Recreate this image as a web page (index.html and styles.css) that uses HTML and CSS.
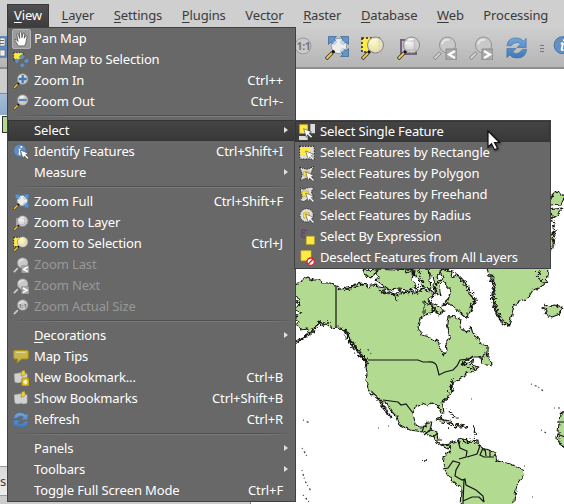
FILE: index.html
```html
<!DOCTYPE html>
<html lang="en">
<head>
<meta charset="utf-8">
<title>View menu</title>
<link rel="stylesheet" href="styles.css">
</head>
<body>
<svg class="defs" width="0" height="0">
  <defs>
    <filter id="coast" x="0" y="0" width="1" height="1"><feTurbulence type="fractalNoise" baseFrequency=".22" numOctaves="2" seed="4"/><feDisplacementMap in="SourceGraphic" scale="5" xChannelSelector="R" yChannelSelector="G"/></filter>
    <filter id="jagged" x="0" y="0" width="1" height="1"><feTurbulence type="fractalNoise" baseFrequency=".4" numOctaves="2" seed="9"/><feDisplacementMap in="SourceGraphic" scale="9" xChannelSelector="R" yChannelSelector="G"/></filter>
    <radialGradient id="glass" cx=".4" cy=".35"><stop offset="0" stop-color="#fafafa"/><stop offset="1" stop-color="#d2d2d2"/></radialGradient>
    <linearGradient id="blue" x2="0" y2="1"><stop offset="0" stop-color="#75a5dc"/><stop offset="1" stop-color="#3f78b8"/></linearGradient>
    <symbol id="lens" viewBox="0 0 24 24">
      <path d="M1 23 7.500 16.500" stroke="#333" stroke-width="3.600"/><path d="M1.500 22.500 7 17" stroke="#f4c63a" stroke-width="2.200"/>
      <circle cx="8.300" cy="15.700" r="1.600" fill="#111"/>
      <circle cx="14.500" cy="9" r="8" fill="url(#glass)" fill-opacity=".9" stroke="#8a8a84" stroke-width="1"/>
      <path d="M9 8q2-5 7-4" fill="none" stroke="#fff" stroke-width="1.500"/>
    </symbol>
    <symbol id="lensgrey" viewBox="0 0 24 24">
      <path d="M1 23 7.500 16.500" stroke="#858585" stroke-width="3.400"/><path d="M1.500 22.500 7 17" stroke="#d2d2d2" stroke-width="2"/>
      <circle cx="14.500" cy="9" r="8" fill="#c9c9c9" stroke="#929292"/><path d="M9 8q2-5 7-4" fill="none" stroke="#e6e6e6" stroke-width="2"/>
    </symbol>
    <symbol id="arrow" viewBox="0 0 24 24"><path d="M10 9 22 14 18 16 23 21 21 23 16 18 14 22z" fill="#fff" stroke="#333" stroke-width=".8"/></symbol>
    <symbol id="hand" viewBox="0 0 24 24"><path d="M7 23 1.500 14q-.8-2.500 2-1l3 3L4.500 5q.5-2.500 2.500-.3L9 11 9 2q1.500-2.500 3 0l.7 8L14.500 3q2-1.500 2.600.8l-.6 7 2.300-4q2-1 2 1.200L19 18l-2 5z" fill="#fff" stroke="#333" stroke-width="1"/></symbol>
    <symbol id="pansel" viewBox="0 0 24 24">
      <path d="M1 1h14v9H8v4l-4 1v-4L1 9z" fill="#ffeb3b"/><path d="M1 1h15v9M1 1v12h5" fill="none" stroke="#333" stroke-width="1.500" stroke-dasharray="2 2"/>
      <path d="m14 3 4 4-3 3h-3L9 7zM10 13l-5 5-2-5 2-3zM22 9l2 6-5 2-3-4zM14 16l4 4-4 4-4-4z" fill="#6790bd" stroke="#44678f" stroke-width=".6"/>
    </symbol>
    <symbol id="zoomin" viewBox="0 0 24 24"><use href="#lens"/><path d="M14.500 3v12M8.500 9h12" stroke="#427ab8" stroke-width="3.500"/></symbol>
    <symbol id="zoomout" viewBox="0 0 24 24"><use href="#lens"/><path d="M8.500 9h12" stroke="#5d86b3" stroke-width="3.500"/></symbol>
    <symbol id="info" viewBox="0 0 24 24"><circle cx="10.500" cy="10" r="9.300" fill="#648fc3" stroke="#3e72ac"/><path d="M11 7.500 9.500 14q-.5 2 2 1M8.500 8.500 11 7.500" fill="none" stroke="#fff" stroke-width="2"/><circle cx="12.500" cy="4.500" r="1.500" fill="#fff"/></symbol>
    <symbol id="identify" viewBox="0 0 24 24"><use href="#info"/><use href="#arrow" x="1"/></symbol>
    <symbol id="full" viewBox="0 0 24 24"><circle cx="14" cy="10" r="7.800" fill="#e6e8ea" stroke="#9a9a96"/><path d="M3.500.5h8L9 3l3 3-3 3-3-3-2.500 2.500zM23.500.5h-8L18 3l-3 3 3 3 3-3 2.500 2.500zM23.500 20.500h-8L18 18l-3-3 3-3 3 3 2.500-2.500z" fill="#6794c4" stroke="#3e6c9c" stroke-width=".8"/><circle cx="14" cy="10" r="6.500" fill="#eee" fill-opacity=".72"/><path d="M1 23 7.500 16.500" stroke="#333" stroke-width="3.600"/><path d="M1.500 22.500 7 17" stroke="#f4c63a" stroke-width="2.200"/><circle cx="8.300" cy="15.700" r="1.600" fill="#111"/></symbol>
    <symbol id="layer" viewBox="0 0 24 24"><path d="M4 4h15v14H4z" fill="#c5bfc8" stroke="#74617a" stroke-width="2"/><use href="#lens"/><path d="M8.500 5h9v9h-8" fill="none" stroke="#74617a" stroke-opacity=".2" stroke-width="1.500"/></symbol>
    <symbol id="zoomsel" viewBox="0 0 24 24"><path d="M1 2h17v14H1z" fill="#ffeb46" stroke="#222" stroke-dasharray="2 2" stroke-width="1.500"/><use href="#lens"/><circle cx="14.500" cy="9" r="7" fill="#fff199" opacity=".45"/></symbol>
    <symbol id="last" viewBox="0 0 24 24"><use href="#lensgrey"/><path d="M13 13h11v11H13z" fill="#aaa" stroke="#888"/><path d="m22 15-6 3.500 6 3.500" fill="none" stroke="#fff" stroke-width="2.200"/></symbol>
    <symbol id="next" viewBox="0 0 24 24"><use href="#lensgrey"/><path d="M13 13h11v11H13z" fill="#aaa" stroke="#888"/><path d="m15 15 6 3.500-6 3.500" fill="none" stroke="#fff" stroke-width="2.200"/></symbol>
    <symbol id="actual" viewBox="0 0 24 24"><use href="#lensgrey"/><text x="14.500" y="13" class="ratio" text-anchor="middle">1:1</text></symbol>
    <symbol id="tip" viewBox="0 0 24 24"><path d="M3 2h18q2 0 2 2v9q0 2-2 2h-8l-7 6 1-6H3q-2 0-2-2V4q0-2 2-2z" fill="#c9b64a" stroke="#a78b10" stroke-width="1.500"/><path d="M4 5h15" stroke="#e1d69a" stroke-width="2"/></symbol>
    <symbol id="book" viewBox="0 0 24 24"><path d="m2 6 11-2 8 2v12q-5 2-9 0-5 2-9 0z" fill="#d1d1d1" stroke="#bbb"/><path d="m12 9 1-7 4-2 2 6-4 3z" fill="#ecd036" stroke="#9f8b1d"/></symbol>
    <symbol id="newbook" viewBox="0 0 24 24"><use href="#book"/><rect x="13" y="12" width="11" height="12" rx="2" fill="#d4b612" stroke="#a18600"/><path d="M18.500 14v8M15 18h7M16 15.500l5 5M21 15.500l-5 5" stroke="#fff" stroke-width="1.500"/></symbol>
    <symbol id="refresh" viewBox="0 0 24 24"><path d="M1 9.500Q2 1 11 1q5 0 8 3.500l3-3v10H12l4-4Q11 3.500 5.500 9.500zM22.500 13.500q-1 9.500-10.500 9.500-5 0-8-3.500l-3 3v-10h10l-4 4q6 4 11-3z" fill="url(#blue)" stroke="#3c70aa" stroke-width=".7"/></symbol>
    <symbol id="single" viewBox="0 0 24 24"><path d="M17 0h7v14h-7zM0 18h13v6H0z" fill="#ddd"/><path d="M1 1h12v13H1z" fill="#ffe944" stroke="#d6bb20"/><use href="#arrow" x="-3" y="-2"/></symbol>
    <symbol id="rectangle" viewBox="0 0 24 24"><path d="M1 2h22v19H1z" fill="#ddd" stroke="#222" stroke-width="1.700" stroke-dasharray="2 2"/><path d="M2 3h15v13H2z" fill="#ffe944"/><use href="#arrow"/></symbol>
    <symbol id="polygon" viewBox="0 0 24 24"><path d="m1 2 11 3 10-4-4 10 4 10-11-3-9 4 3-10z" fill="#ddd" stroke="#222" stroke-width="1.500" stroke-dasharray="2 1.500"/><path d="M7 8h8v7H7z" fill="#ffe944" stroke="#c1a51a"/><use href="#arrow"/></symbol>
    <symbol id="freehand" viewBox="0 0 24 24"><path d="M2 1q4 4 9 1 8-3 11 0-5 4-2 9t-2 8q-5-3-9 2-5 2-7-2 5-4 1-9z" fill="#ddd" stroke="#222" stroke-width="1.500" stroke-dasharray="2 1.500"/><path d="M5 6h9v8H5z" fill="#ffe944" stroke="#c1a51a"/><use href="#arrow"/></symbol>
    <symbol id="radius" viewBox="0 0 24 24"><circle cx="11.500" cy="11" r="10" fill="#ddd" stroke="#222" stroke-width="1.500" stroke-dasharray="2 2"/><path d="M7 7h8v8H7z" fill="#ffe944" stroke="#c1a51a"/><use href="#arrow"/></symbol>
    <symbol id="expression" viewBox="0 0 24 24"><path d="M12 3Q4-1 4 4q1 3 5 2-7 1-5 5 3 3 8 0" fill="none" stroke="#644b70" stroke-width="2.500"/><path d="M11 11h12v12H11z" fill="#ffe944" stroke="#cdb11c"/></symbol>
    <symbol id="deselect" viewBox="0 0 24 24"><path d="M3 1h15v15H3z" fill="#ffe944" stroke="#d5b918"/><circle cx="17.500" cy="17.500" r="5.500" fill="#fff" stroke="#d3232c" stroke-width="2"/><path d="m14 21 7-7" stroke="#d3232c" stroke-width="2"/></symbol>
  </defs>
</svg>

<div class="window">
  <nav class="menubar">
    <span class="title open"><u>V</u>iew</span><span class="title"><u>L</u>ayer</span><span class="title"><u>S</u>ettings</span><span class="title"><u>P</u>lugins</span><span class="title">Vect<u>o</u>r</span><span class="title"><u>R</u>aster</span><span class="title"><u>D</u>atabase</span><span class="title"><u>W</u>eb</span><span class="title">Processing</span>
  </nav>
  <div class="toolbar">
    <svg class="clip" viewBox="0 0 7 22"><path d="M0 0h7v22H0z" fill="#5f8fc4"/><path d="M0 2h5v8H0zM0 14h5v6H0z" fill="#eee" stroke="#666" stroke-width=".6"/><path d="M0 4.500h4M0 7.500h4" stroke="#666"/></svg>
    <svg class="one"><circle cx="8" cy="10" r="8" fill="#c9c9c9" stroke="#999"/><text x="8.500" y="14" class="ratio large" text-anchor="middle">1:1</text></svg>
    <svg><use href="#full"/></svg><svg><use href="#zoomsel"/></svg><svg><use href="#layer"/></svg><svg><use href="#last"/></svg><svg><use href="#next"/></svg><svg class="reload"><use href="#refresh"/></svg>
    <i class="grip"></i>
    <svg class="edge"><use href="#info"/></svg>
  </div>
  <main class="workspace">
    <aside class="panel">
      <div class="panel-head"></div><div class="panel-selected"></div><div class="legend"></div><div class="panel-space"></div><div class="panel-tab">s</div><div class="panel-foot"></div>
    </aside>
    <svg class="map" viewBox="296 69 268 435">
      <g class="land" filter="url(#coast)">
        <path d="M285 287 298 283 302 282 304 279 308 277 312 280 319 280 323 283 329 283 336 286 342 290 345 287 349 289 354 285 357 286 360 282 363 285 366 283 368 287 375 284 379 288 385 289 382 293 390 292 395 295 399 290 407 294 412 290 417 293 423 288 428 292 431 289 434 297 428 299 431 304 425 312 429 314 420 318 418 327 422 335 430 337 438 342 441 350 444 354 447 351 446 343 450 337 447 328 449 317 454 316 461 320 460 326 466 333 471 327 473 334 477 337 480 343 487 347 487 355 481 357 471 357 465 361 461 366 467 363 473 360 471 365 479 367 473 371 467 373 464 376 458 380 451 385 452 391 450 395 442 402 444 413 441 413 438 405 431 403 427 406 422 404 415 407 413 413 415 423 420 427 425 427 427 422 432 422 430 430 437 432 438 441 443 445 449 444 448 449 442 446 438 444 433 437 427 434 422 432 417 431 410 430 400 425 397 417 391 411 387 404 381 400 383 405 387 410 389 415 392 418 387 414 382 407 379 400 372 394 368 388 366 381 367 374 366 367 368 362 362 357 358 351 352 345 349 337 344 330 338 327 333 328 326 324 321 326 320 322 315 326 314 331 309 335 303 338 295 344 285 347 299 339 307 335 308 329 301 330 297 325 299 322 295 320 297 315 302 313 296 310 300 304 295 301 301 300 295 297z"/>
        <path d="m363 269 2 6 5 3 5-3 2-5zM373 268l6 8-3 4 7 5 5 5 11-1 10 1 7-4-4-6 2-10zM405 267l2 6 6-3zM410 267l6 11 7 2-1 6 9 4-2-23zM426 268l6 8 4 18 5 2-2-10 4-8-3-7 5-3-5-2zM442 268l10 4-1 5 7-2 5 6 3 7 5 8 5 4-4 9-4 4-1 6-7-6-6-7-5-2-7 1 6-5 3-10-6-7-8-5zM424 302l7 3 2 7-9 3zM433 303l8 4 3 5-5 2-7-3z"/>
        <path d="m487 260 0 8 2 7 5 2-2 6 3 5-2 7 1 12 4 9 4 7 7 3 2-8 3-12 6-5 8-3 5-8 8-3 6-5 1-7-1-12zM546 207l5-10 6-6 8 5-4 9-10 1zM547 210l16-2-7 8-6 3zM550 235l4-4-1 17-3 3zM545 304l5 3 4-2 6 1 3 3-3 5-8 3-7-3 2-4-4-2z"/>
        <path d="m458 440 6-1 5 2 9 1 2 5 5 2 9 3 3 8 10 3 9 3 7 4 1 5-7 9-2 11-3 17h-51l1-23-10-9-9-13 1-10 7-7-1-7zM575 402l-15 13-2 17-1 7 4 6 15 9z"/>
        <path d="m436 420 5-2 10 5 1 2-9-3zM456 424l8 2-9 2zM481 357l5-4 3 7 4 3-1 3-10-2z"/>
      </g>
      <g class="border">
        <path d="M336 286v41M368 360h50l5 2h4q9-1 10 5l2 8 6-3 8-2 4-4 3-6 9-1 4-3M383 400l15 2 3 3 5-1 7 9M422 432l2-6 3 1M430 430l-6 5M433 437l5-4M437 440h5M458 440l2 8 7 3-1 6-7 2M443 469l5-1 5-7 7 2M460 463l-4 7-1 6 7 4 3-1 1 6 10 5 7 6 1 6M464 479l-1 25M463 501l9-4 7 0 5 5M467 457l10-3 3-8M483 448l-3 7 4 2 10 0M485 449l1 7M490 451l0 6M557 422h8M557 434l8 3"/>
      </g>
      <g class="rough" filter="url(#jagged)">
        <path d="m344 330 3 8 5 7 7 10 9 7M347 332l4 10 9 12 8 6M346 330l5 11 8 11 9 10M317 325l-7 8-13 10M319 323h11M345 289l17-4M380 291l15 4 12-3 12 1M395 295l2 6M445 269l10 4 8 8 6 7 6 12-5 6 1 6M490 278l4 7-2 11 3 15 7 12 6 2M492 276l2 10 0 12 3 14 8 11M462 363l7 5 9 3M486 353l3 7M452 379l0 10-4 7M539 270l-1 8 6 5M551 213l4 17-2 18M419 269l2 16-5 6M438 281l-8 23 6 7M381 403l10 14M438 418l6-1M448 411l9 8M449 425l20 2M474 427l2 14M457 442l19-1M495 461l7 1M424 461h3M557 436l5 4"/>
      </g>
      <path class="specks" d="M531 384l5 2 4 2 3 3M471 399h2M303 420l7 3M302 448l6 10M302 470l3 11 6 10M303 495l7 8M378 428h2M388 426h2M541 430l5 3M554 408h7M524 466h2M532 497h2M371 354l-4-6"/>
    </svg>
  </main>
</div>

<div class="menu view">
  <div class="item"><svg class="checked"><use href="#hand"/></svg><span>Pan Map</span></div>
  <div class="item"><svg><use href="#pansel"/></svg><span>Pan Map to Selection</span></div>
  <div class="item"><svg><use href="#zoomin"/></svg><span>Zoom In</span><kbd>Ctrl++</kbd></div>
  <div class="item"><svg><use href="#zoomout"/></svg><span>Zoom Out</span><kbd>Ctrl+-</kbd></div>
  <hr>
  <div class="item active"><svg></svg><span>Select</span><b></b></div>
  <div class="item"><svg><use href="#identify"/></svg><span>Identify Features</span><kbd>Ctrl+Shift+I</kbd></div>
  <div class="item"><svg></svg><span>Measure</span><b></b></div>
  <hr>
  <div class="item"><svg><use href="#full"/></svg><span>Zoom Full</span><kbd>Ctrl+Shift+F</kbd></div>
  <div class="item"><svg><use href="#layer"/></svg><span>Zoom to Layer</span></div>
  <div class="item"><svg><use href="#zoomsel"/></svg><span>Zoom to Selection</span><kbd>Ctrl+J</kbd></div>
  <div class="item disabled"><svg><use href="#last"/></svg><span>Zoom Last</span></div>
  <div class="item disabled"><svg><use href="#next"/></svg><span>Zoom Next</span></div>
  <div class="item disabled"><svg><use href="#actual"/></svg><span>Zoom Actual Size</span></div>
  <hr>
  <div class="item"><svg></svg><span><u>D</u>ecorations</span><b></b></div>
  <div class="item"><svg><use href="#tip"/></svg><span>Map Tips</span></div>
  <div class="item"><svg><use href="#newbook"/></svg><span>New Bookmark...</span><kbd>Ctrl+B</kbd></div>
  <div class="item"><svg><use href="#book"/></svg><span>Show Bookmarks</span><kbd>Ctrl+Shift+B</kbd></div>
  <div class="item"><svg><use href="#refresh"/></svg><span>Refresh</span><kbd>Ctrl+R</kbd></div>
  <hr>
  <div class="item"><svg></svg><span>Panels</span><b></b></div>
  <div class="item"><svg></svg><span>Toolbars</span><b></b></div>
  <div class="item"><svg></svg><span>Toggle Full Screen Mode</span><kbd>Ctrl+F</kbd></div>
</div>

<div class="menu submenu">
  <div class="item active"><svg><use href="#single"/></svg><span>Select Single Feature</span></div>
  <div class="item"><svg><use href="#rectangle"/></svg><span>Select Features by Rectangle</span></div>
  <div class="item"><svg><use href="#polygon"/></svg><span>Select Features by Polygon</span></div>
  <div class="item"><svg><use href="#freehand"/></svg><span>Select Features by Freehand</span></div>
  <div class="item"><svg><use href="#radius"/></svg><span>Select Features by Radius</span></div>
  <div class="item"><svg><use href="#expression"/></svg><span>Select By Expression</span></div>
  <div class="item"><svg><use href="#deselect"/></svg><span>Deselect Features from All Layers</span></div>
</div>
<svg class="cursor" viewBox="0 0 14 21"><path d="M1 1v16l3.500-3.300 3 6 3-1.500-3-5.700h5z" fill="#fff" stroke="#111" stroke-width="1.200"/></svg>
</body>
</html>
```
FILE: styles.css
```css
* { box-sizing: border-box; }
body { margin: 0; width: 564px; height: 504px; overflow: hidden; background: #fff; font: 13px/20px "Noto Sans", sans-serif; letter-spacing: -.14px; color: #3b3b3b; }
.defs { position: absolute; }
svg { display: block; flex: none; }
u { text-decoration-thickness: 1px; text-underline-offset: 2px; text-decoration-skip-ink: none; }
.window { display: flex; flex-direction: column; width: 564px; height: 504px; overflow: hidden; }
.menubar { display: flex; gap: 5.6px; height: 27px; flex: none; padding: 4px 0 0 7px; background: #cfcfcf; white-space: nowrap; }
.title { height: 23px; padding: 1px 7px 0; }
.title.open { background: linear-gradient(#505050, #3c3c3c); border: 1px solid #393939; border-bottom: 0; color: #fff; padding: 0 6px; }
.toolbar { display: flex; align-items: flex-start; gap: 12px; height: 42px; flex: none; padding: 9px 0 0; background: linear-gradient(#cfcfcf, #b5b5b5); border-bottom: 2px solid #8e8e8e; }
.toolbar svg { width: 24px; height: 24px; }
.toolbar .clip { width: 7px; height: 22px; margin-right: 276px; }
.toolbar .one { width: 18px; height: 20px; }
.toolbar .reload { padding: 1px; }
.toolbar .grip { width: 4px; height: 8px; margin: 9px 1px 0 -1px; flex: none; background: repeating-linear-gradient(#777 0 1px, transparent 1px 3px); }
.toolbar .edge { width: 22px; height: 22px; margin-left: -4px; }
.ratio { font: bold 9px "Noto Sans", sans-serif; fill: #777; }
.ratio.large { font-size: 10.500px; letter-spacing: -.4px; }
.workspace { display: flex; flex: 1; min-height: 0; }
.panel { width: 296px; display: flex; flex-direction: column; }
.panel-head { height: 25px; background: #ccc; border-bottom: 1px solid #888; }
.panel-selected { height: 21px; background: linear-gradient(#a5bed8, #8eaac7); }
.legend { width: 10px; height: 17px; margin: 1px 0 0 2px; background: #b3da91; border: 1px solid #333; }
.panel-space { flex: 1; }
.panel-tab { height: 30px; padding-top: 4px; background: linear-gradient(#d8d8d8, #eee); border: solid #999; border-width: 1px 0; width: 250px; }
.panel-foot { height: 8px; width: 251px; background: #ccc; border-right: 1px solid #888; }
.map { width: 268px; height: 435px; }
.land { fill: #b3da91; stroke: #151515; stroke-width: 1.100; stroke-linejoin: bevel; }
.border { fill: none; stroke: #151515; stroke-width: 1.200; }
.rough { fill: none; stroke: #151515; stroke-width: 1.600; stroke-dasharray: 5 1 3 1; }
.specks { fill: none; stroke: #444; stroke-width: 1.200; stroke-dasharray: 1 3 2 2; }
.menu { position: absolute; background: #686868; border: 1px solid #414141; color: #fff; }
.view { left: 7px; top: 27px; width: 289px; height: 475px; }
.submenu { left: 294px; top: 120px; width: 257px; height: 149px; }
.item { display: flex; align-items: center; height: 21px; padding: 0 12px 0 5px; white-space: nowrap; }
.item svg { width: 16px; height: 16px; margin-right: 5px; }
.item span, .item kbd { padding-bottom: 2px; }
.submenu .item { padding-left: 4px; }
.item .checked { width: 19px; height: 20px; padding: 1px; margin: 0 3px 0 -1px; background: #9b9b9b; border: 1px solid #b4b4b4; border-radius: 2px; }
.item kbd { margin-left: auto; font: inherit; }
.item b { margin: 0 -5px 1px auto; border: solid transparent; border-width: 3.500px 0 3.500px 4px; border-left-color: #e0e0e0; }
.item.active { background: linear-gradient(#454545, #383838); box-shadow: inset 0 0 0 1px #353535; }
.item.disabled { color: #989898; }
.menu hr { height: 8px; margin: 0; border: 0; background: linear-gradient(90deg, transparent, #505050 20%, #505050 90%, transparent) 0 3px / 100% 1px no-repeat, linear-gradient(90deg, transparent, #7b7b7b 20%, #7b7b7b 90%, transparent) 0 4px / 100% 1px no-repeat; }
.cursor { position: absolute; left: 487px; top: 130px; width: 14px; height: 21px; filter: drop-shadow(1px 1px 1px #0008); }
```
